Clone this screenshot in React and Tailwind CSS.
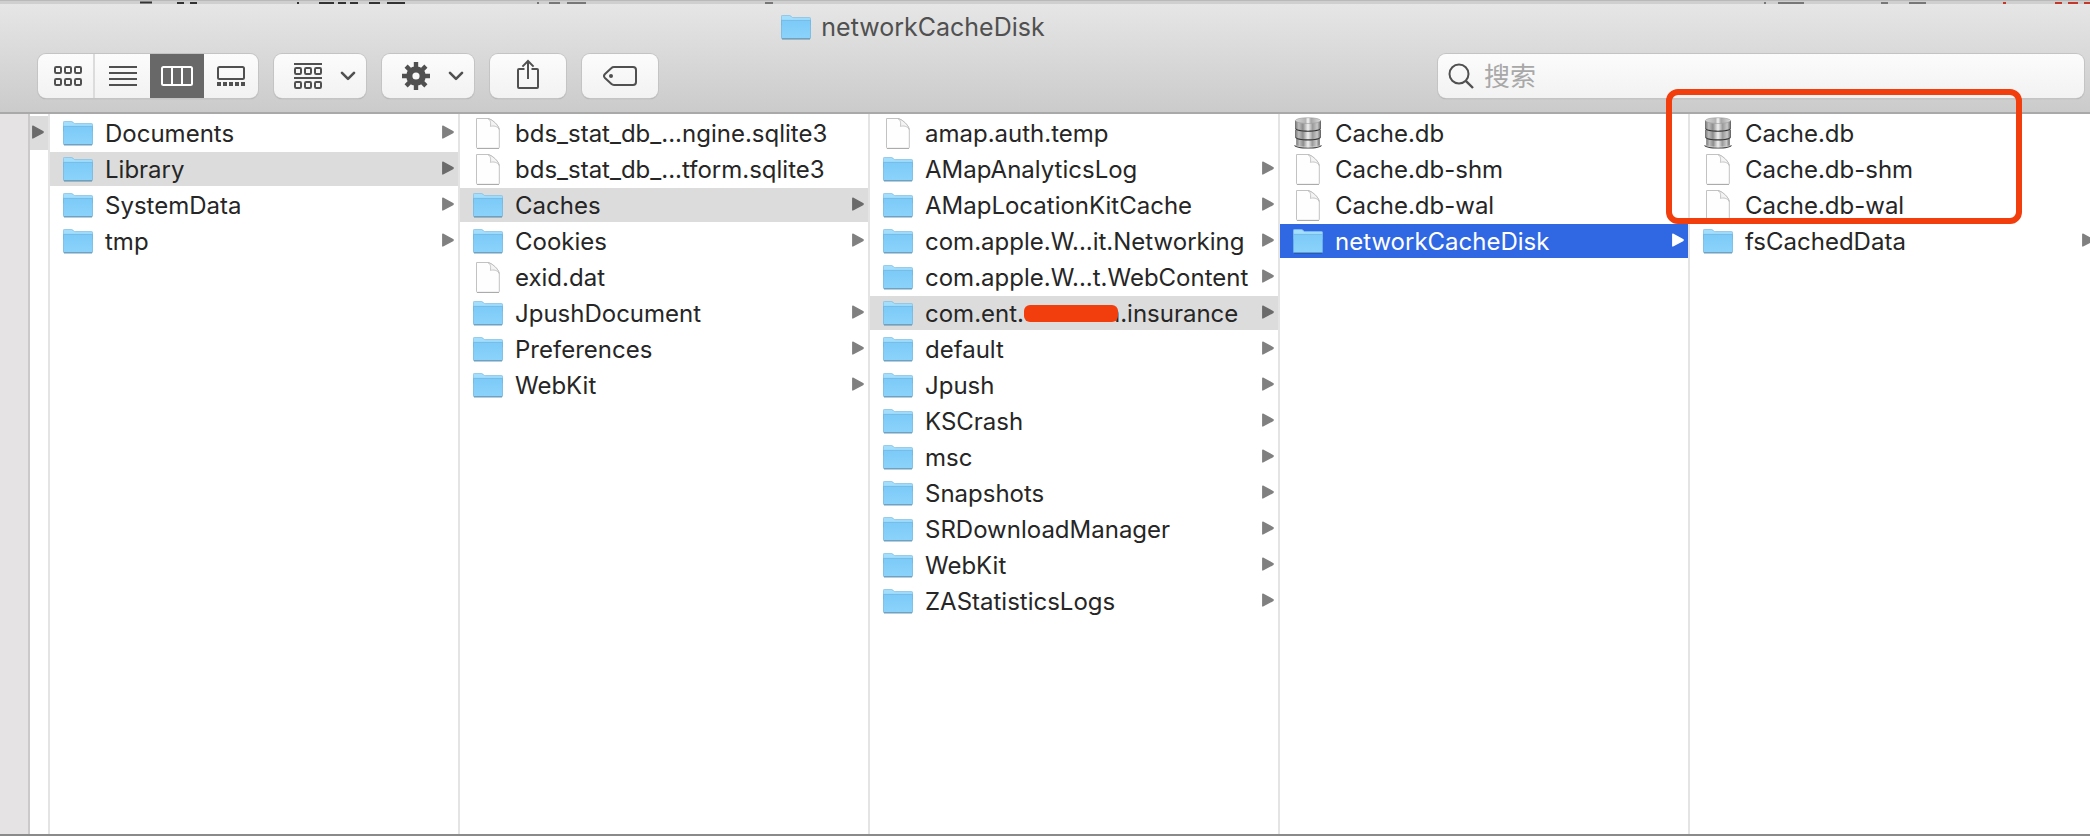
import React from "react";

const columns = [
  {
    label: "Container",
    items: [
      { name: "Documents", kind: "folder" },
      { name: "Library", kind: "folder", state: "path" },
      { name: "SystemData", kind: "folder" },
      { name: "tmp", kind: "folder" },
    ],
  },
  {
    label: "Library",
    items: [
      { name: "bds_stat_db_...ngine.sqlite3", kind: "file" },
      { name: "bds_stat_db_...tform.sqlite3", kind: "file" },
      { name: "Caches", kind: "folder", state: "path" },
      { name: "Cookies", kind: "folder" },
      { name: "exid.dat", kind: "file" },
      { name: "JpushDocument", kind: "folder" },
      { name: "Preferences", kind: "folder" },
      { name: "WebKit", kind: "folder" },
    ],
  },
  {
    label: "Caches",
    items: [
      { name: "amap.auth.temp", kind: "file" },
      { name: "AMapAnalyticsLog", kind: "folder" },
      { name: "AMapLocationKitCache", kind: "folder" },
      { name: "com.apple.W...it.Networking", kind: "folder" },
      { name: "com.apple.W...t.WebContent", kind: "folder" },
      { name: "com.ent.", redacted: true, tail: "n.insurance", kind: "folder", state: "path" },
      { name: "default", kind: "folder" },
      { name: "Jpush", kind: "folder" },
      { name: "KSCrash", kind: "folder" },
      { name: "msc", kind: "folder" },
      { name: "Snapshots", kind: "folder" },
      { name: "SRDownloadManager", kind: "folder" },
      { name: "WebKit", kind: "folder" },
      { name: "ZAStatisticsLogs", kind: "folder" },
    ],
  },
  {
    label: "Insurance",
    items: [
      { name: "Cache.db", kind: "db" },
      { name: "Cache.db-shm", kind: "file" },
      { name: "Cache.db-wal", kind: "file" },
      { name: "networkCacheDisk", kind: "folder", state: "selected" },
    ],
  },
  {
    label: "networkCacheDisk",
    marked: true,
    items: [
      { name: "Cache.db", kind: "db" },
      { name: "Cache.db-shm", kind: "file" },
      { name: "Cache.db-wal", kind: "file" },
      { name: "fsCachedData", kind: "folder" },
    ],
  },
];

function Defs() {
  return (
    <svg className="absolute size-0" aria-hidden="true">
      <defs>
        <linearGradient id="folderFront" x1="0" y1="0" x2="0" y2="1">
          <stop offset="0" stopColor="#7ccaf8" />
          <stop offset="1" stopColor="#8bd3fb" />
        </linearGradient>
        <linearGradient id="steel" x1="0" y1="0" x2="1" y2="0">
          <stop offset="0" stopColor="#777" />
          <stop offset="0.14" stopColor="#bdbdbd" />
          <stop offset="0.3" stopColor="#8c8c8c" />
          <stop offset="0.5" stopColor="#f0f0f0" />
          <stop offset="0.68" stopColor="#9a9a9a" />
          <stop offset="0.86" stopColor="#c8c8c8" />
          <stop offset="1" stopColor="#666" />
        </linearGradient>
        <linearGradient id="steelTop" x1="0" y1="0" x2="1" y2="0">
          <stop offset="0" stopColor="#d8d8d8" />
          <stop offset="0.4" stopColor="#b4b4b4" />
          <stop offset="0.5" stopColor="#f6f6f6" />
          <stop offset="0.62" stopColor="#a6a6a6" />
          <stop offset="1" stopColor="#dedede" />
        </linearGradient>
      </defs>
    </svg>
  );
}

function FolderIcon() {
  return (
    <svg viewBox="0 0 30 25" className="h-[25px] w-[30px] shrink-0" aria-hidden="true">
      <path d="M1 24.4H29" stroke="#000" strokeOpacity="0.22" strokeWidth="1" />
      <path d="M.4 1.4Q.4.4 1.4.4H8.2Q9.2.4 9.8 1.1L10.6 2Q11.2 2.6 12.2 2.6H28.6Q29.6 2.6 29.6 3.6V10H.4Z" fill="#a3defc" stroke="#80bfe6" strokeWidth=".8" />
      <path d="M.4 5.4H29.6V22.8Q29.6 23.6 28.8 23.6H1.2Q.4 23.6 .4 22.8Z" fill="url(#folderFront)" stroke="#6db4e0" strokeWidth=".8" />
      <path d="M1 23.5H29" stroke="#5b9dc6" strokeWidth=".8" />
    </svg>
  );
}

function FileIcon() {
  return (
    <svg viewBox="0 0 30 32" className="h-8 w-[30px] shrink-0" aria-hidden="true">
      <path d="M3.5 1.5H14.5C18.5 1.5 26.3 8.5 26.3 13V30.5Q26.3 31.3 25.5 31.3H4.3Q3.5 31.3 3.5 30.5Z" fill="#fefefe" stroke="#c2c2c2" strokeWidth="1" />
      <path d="M14.5 1.5C17.6 2.4 18 6 17.4 9.4C20.6 8.4 24.4 9.2 26.2 12.4C25.6 8 18.6 1.8 14.5 1.5Z" fill="#f4f4f4" stroke="#b9b9b9" strokeWidth=".8" />
      <path d="M4 31.5H26" stroke="#a2a2a2" strokeWidth=".8" />
    </svg>
  );
}

function DatabaseIcon() {
  return (
    <svg viewBox="0 0 30 32" className="h-8 w-[30px] shrink-0" aria-hidden="true">
      <path d="M1.2 28.2H28.8C28.8 30.4 22 31.6 15 31.6S1.2 30.4 1.2 28.2Z" fill="#3a3a3a" />
      <path d="M3.2 22H26.8V27.6C26.8 29.6 21 30.5 15 30.5S3.2 29.6 3.2 27.6Z" fill="url(#steel)" />
      <path d="M2.2 28.2C5 30.8 25 30.8 27.8 28.2" fill="none" stroke="#ddd" strokeWidth=".8" />
      <path d="M2.2 13H27.8V20.2C27.8 22.4 21.4 23.4 15 23.4S2.2 22.4 2.2 20.2Z" fill="#333" />
      <path d="M2.2 12.6H27.8V19.2C27.8 21.3 21.4 22.3 15 22.3S2.2 21.3 2.2 19.2Z" fill="url(#steel)" />
      <path d="M2.2 4V11.6C2.2 13.8 8.6 14.8 15 14.8S27.8 13.8 27.8 11.6V4Z" fill="#333" />
      <path d="M2.2 3.4V10.6C2.2 12.7 8.6 13.7 15 13.7S27.8 12.7 27.8 10.6V3.4Z" fill="url(#steel)" />
      <ellipse cx="15" cy="3.6" rx="12.6" ry="2.9" fill="url(#steelTop)" stroke="#9a9a9a" strokeWidth=".6" />
    </svg>
  );
}

function Arrow({ className }) {
  return (
    <svg viewBox="0 0 12 16" className={"h-4 w-3 shrink-0 " + className} aria-hidden="true">
      <path d="M.8 1.2L10.8 6.6Q11.6 7.1 10.8 7.6L.8 13Z" fill="currentColor" stroke="currentColor" strokeWidth="1.4" strokeLinejoin="round" />
    </svg>
  );
}

const icons = { folder: FolderIcon, file: FileIcon, db: DatabaseIcon };
const rowTone = {
  path: "bg-[#dcdcdc] text-[#262626]",
  selected: "bg-[#3067e3] text-white",
};
const arrowTone = { path: "text-[#6b6b6b]", selected: "text-white" };

function Row({ item }) {
  const Icon = icons[item.kind];
  return (
    <li>
      <button
        type="button"
        className={"flex h-[34px] w-full items-center gap-3 pr-1 pl-[13px] text-left " + (rowTone[item.state] || "text-[#262626]")}
      >
        <Icon />
        <span className="flex-1 pt-0.5 leading-8 whitespace-nowrap">
          {item.name}
          {item.redacted && (
            <span className="relative -mr-3 inline-block h-[17px] w-[94px] rounded-md bg-[#f23d0c] align-baseline" />
          )}
          {item.tail}
        </span>
        {item.kind === "folder" && <Arrow className={arrowTone[item.state] || "text-[#808080]"} />}
      </button>
    </li>
  );
}

function Column({ column }) {
  return (
    <section aria-label={column.label} className="relative w-[410px] shrink-0 border-r-2 border-[#e4e4e4]">
      <ul className="flex flex-col gap-0.5 pt-0.5">
        {column.items.map((item) => (
          <Row key={item.name} item={item} />
        ))}
      </ul>
      {column.marked && (
        <div className="pointer-events-none absolute -top-[25px] -left-6 h-[135px] w-[356px] rounded-xl border-[6px] border-[#f23d0c]" />
      )}
    </section>
  );
}

const surface = "h-11 bg-linear-to-b from-[#fcfcfc] to-[#f2f2f2] rounded-[8px] shadow-[0_0_0_1px_#c4c4c4,0_1px_1px_0_#999]";

function Chevron() {
  return (
    <svg viewBox="0 0 16 10" className="h-2.5 w-4" fill="none" stroke="#505050" strokeWidth="2.6" strokeLinecap="round" strokeLinejoin="round" aria-hidden="true">
      <path d="M2 1.8L8 7.8L14 1.8" />
    </svg>
  );
}

function Squares({ y }) {
  return [1, 11, 21].map((x) => <rect key={x} x={x} y={y} width="6" height="6" rx="1.2" />);
}

const line = { fill: "none", stroke: "#505050", strokeWidth: 2, "aria-hidden": true };

function Toolbar() {
  return (
    <div className="flex h-11 items-center gap-4">
      <div role="group" aria-label="View" className={"flex overflow-hidden " + surface}>
        <button type="button" aria-label="Icons" className="flex w-[57px] items-center justify-center border-r-2 border-[#dcdcdc] pl-1">
          <svg viewBox="0 0 28 20" className="h-5 w-7" {...line}>
            <Squares y={1} />
            <Squares y={13} />
          </svg>
        </button>
        <button type="button" aria-label="List" className="flex w-[55px] items-center justify-center">
          <svg viewBox="0 0 28 20" className="h-5 w-7" {...line}>
            <path d="M0 1H28M0 7H28M0 13H28M0 19H28" />
          </svg>
        </button>
        <button type="button" aria-label="Columns" aria-pressed="true" className="flex w-[54px] items-center justify-center bg-[#686868]">
          <svg viewBox="0 0 32 20" className="h-5 w-8" fill="none" stroke="#fff" strokeWidth="2" aria-hidden="true">
            <rect x="1" y="1" width="30" height="18" rx="1.5" />
            <path d="M11 1V19M21 1V19" />
          </svg>
        </button>
        <button type="button" aria-label="Gallery" className="flex w-[54px] items-center justify-center">
          <svg viewBox="0 0 28 20" className="h-5 w-7" {...line}>
            <rect x="1" y="1" width="26" height="12" rx="1.5" />
            <path d="M0 18H28" strokeWidth="4" strokeDasharray="4 2" />
          </svg>
        </button>
      </div>
      <button type="button" aria-label="Group" className={"flex w-[92px] items-center justify-between pr-2.5 pl-5 " + surface}>
        <svg viewBox="0 0 28 26" className="h-[26px] w-7" {...line}>
          <path d="M0 1H28M0 15H28" />
          <Squares y={5} />
          <Squares y={19} />
        </svg>
        <Chevron />
      </button>
      <button type="button" aria-label="Actions" className={"flex w-[92px] items-center justify-between pr-2.5 pl-5 " + surface}>
        <svg viewBox="0 0 28 28" className="size-7" fill="none" stroke="#505050" aria-hidden="true">
          <circle cx="14" cy="14" r="6.7" strokeWidth="6.2" />
          <path d="M14 0V5M14 23V28M0 14H5M23 14H28M4.1 4.1L7.6 7.6M20.4 20.4L23.9 23.9M4.1 23.9L7.6 20.4M20.4 7.6L23.9 4.1" strokeWidth="4.4" />
        </svg>
        <Chevron />
      </button>
      <button type="button" aria-label="Share" className={"flex w-[76px] items-center justify-center " + surface}>
        <svg viewBox="0 0 22 30" className="mb-1 h-[30px] w-[22px]" {...line}>
          <path d="M7.5 10H2Q1 10 1 11V28Q1 29 2 29H20Q21 29 21 28V11Q21 10 20 10H14.5" />
          <path d="M11 20V2M5.4 7.6L11 2L16.6 7.6" />
        </svg>
      </button>
      <button type="button" aria-label="Tags" className={"flex w-[76px] items-center justify-center " + surface}>
        <svg viewBox="0 0 34 20" className="h-5 w-[34px]" {...line}>
          <path d="M11 1H30Q33 1 33 4V16Q33 19 30 19H11Q9.4 19 8.2 17.8L2 12Q0 10 2 8L8.2 2.2Q9.4 1 11 1Z" />
          <circle cx="8" cy="10" r="2" fill="#505050" stroke="none" />
        </svg>
      </button>
      <label className={"ml-auto flex w-[646px] items-center gap-2.5 px-2.5 " + surface}>
        <svg viewBox="0 0 26 26" className="size-[26px] shrink-0" {...line}>
          <circle cx="11" cy="11" r="9.5" />
          <path d="M17.8 17.8L25 25" strokeWidth="2.4" />
        </svg>
        <input
          type="search"
          aria-label="搜索"
          placeholder="搜索"
          className="w-full bg-transparent pt-0.5 text-[26px] leading-8 outline-none placeholder:text-[#a8a8a8]"
        />
      </label>
    </div>
  );
}

/* Slivers of the window behind, peeking out above the title bar. */
function BackdropStrip() {
  return (
    <div className="h-1 overflow-hidden border-t border-[#b9b9b9] bg-[#cfcfcf]">
      <svg className="h-[3px] w-full" fill="none" aria-hidden="true">
        <path d="M140 1.5H152M177 2H184M190 2H197M297 2H299M319 2H334M338 2H346M350 2H358M369 2H380M387 2H405" stroke="#333" strokeWidth="2" />
        <path d="M537 2H539M549 2H560M567 2H586M765 2H773M1764 2H1766M1778 2H1804M1881 2H1888M1909 2H1926" stroke="#777" strokeWidth="2" />
        <path d="M2003 2H2006M2055 2H2062M2068 2H2078M2084 2H2090" stroke="#c0392b" strokeWidth="2" />
      </svg>
    </div>
  );
}

export default function App() {
  return (
    <div className="flex min-h-screen flex-col overflow-hidden bg-white font-['Inter','Noto_Sans_CJK_SC',sans-serif] text-2xl">
      <Defs />
      <BackdropStrip />
      <header className="flex flex-col gap-2 border-b-2 border-[#a9a9a9] bg-linear-to-b from-[#e6e6e6] to-[#cbcbcb] pt-1.5 pr-1.5 pb-3.5 pl-[38px]">
        <h1 className="flex h-9 items-center justify-center gap-2.5 pr-[296px] pb-0.5 text-[25px] leading-8 text-[#505050]">
          <FolderIcon />
          networkCacheDisk
        </h1>
        <Toolbar />
      </header>
      <main className="flex flex-1 border-b-2 border-[#8a8a8a]">
        <aside aria-label="Sidebar" className="w-[30px] shrink-0 border-r-2 border-[#cbc9c9] bg-[#e5e3e4]" />
        <div className="w-5 shrink-0 border-r-2 border-[#e4e4e4] pt-0.5">
          <div className="flex h-[34px] items-center bg-[#dcdcdc] pl-0.5">
            <Arrow className="text-[#6b6b6b]" />
          </div>
        </div>
        {columns.map((column) => (
          <Column key={column.label} column={column} />
        ))}
      </main>
    </div>
  );
}
